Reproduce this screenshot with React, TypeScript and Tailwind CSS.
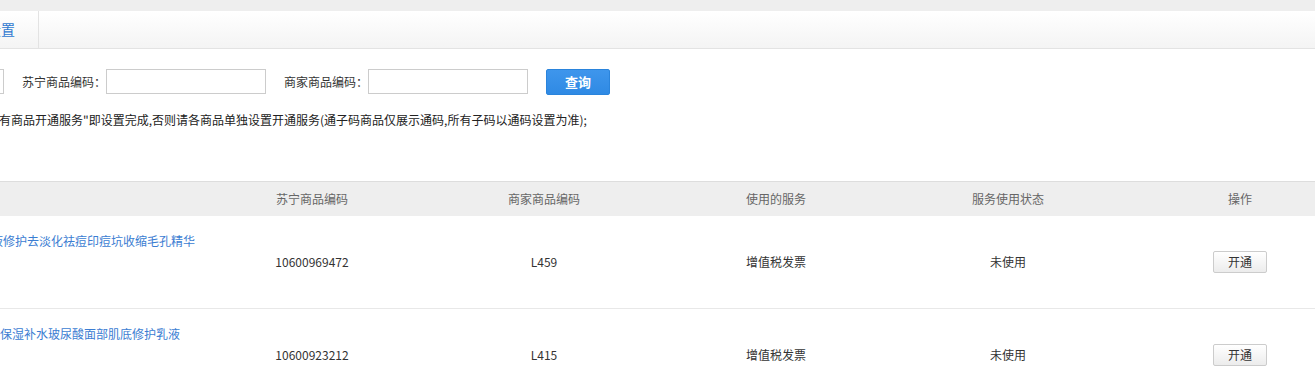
import React from "react";

const font = { fontFamily: '"Noto Sans CJK SC", "Noto Sans", sans-serif' };

const rows = [
  { name: "液修护去淡化祛痘印痘坑收缩毛孔精华", nameClass: "-ml-[9px]", sn: "10600969472", code: "L459" },
  { name: "保湿补水玻尿酸面部肌底修护乳液", nameClass: "ml-0", sn: "10600923212", code: "L415" },
];

export default function App() {
  return (
    <div className="w-[1315px] h-[371px] overflow-hidden bg-white text-[12px] text-[#333]" style={font}>
      <div className="h-[11px] bg-[#eeeeee]" />
      <div className="h-[38px] flex border-b border-[#e3e3e3] bg-gradient-to-b from-white to-[#f4f4f4]">
        <div className="w-[52px] shrink-0 -ml-[13px] border-r border-[#e3e3e3] flex items-center text-[14px] text-[#2f79d0] whitespace-nowrap">
          设置
        </div>
      </div>

      <div className="mt-[20px] flex items-center h-[25px]">
        <div className="w-[4px] h-[25px] border border-l-0 border-[#cccccc]" />
        <span className="ml-[18px] w-[84px] whitespace-nowrap">苏宁商品编码：</span>
        <div className="w-[160px] h-[25px] border border-[#cccccc]" />
        <span className="ml-[18px] w-[84px] whitespace-nowrap">商家商品编码：</span>
        <div className="w-[160px] h-[25px] border border-[#cccccc]" />
        <button className="ml-[18px] w-[64px] h-[26px] rounded-[2px] border border-[#2a84dc] bg-gradient-to-b from-[#3e96ec] to-[#2f8ae4] text-white font-bold text-[13px]">
          查询
        </button>
      </div>

      <div className="mt-[16px] leading-[20px] whitespace-nowrap -ml-[1px] text-[#222]">
        有商品开通服务"即设置完成,否则请各商品单独设置开通服务(通子码商品仅展示通码,所有子码以通码设置为准);
      </div>

      <div className="mt-[51px] w-[1356px]">
        <div className="grid grid-cols-[196px_232px_232px_232px_232px_232px] h-[35px] bg-[#eeeeee] border-t border-[#dddddd] text-[#666] items-center text-center">
          <div />
          <div>苏宁商品编码</div>
          <div>商家商品编码</div>
          <div>使用的服务</div>
          <div>服务使用状态</div>
          <div>操作</div>
        </div>
        {rows.map((r) => (
          <div
            key={r.sn}
            className="grid grid-cols-[196px_232px_232px_232px_232px_232px] h-[93px] border-b border-[#e8e8e8] items-center text-center"
          >
            <div className="self-stretch pt-[16px] text-left">
              <div className={`whitespace-nowrap text-[#3b7dd2] leading-[18px] ${r.nameClass}`}>{r.name}</div>
            </div>
            <div>{r.sn}</div>
            <div>{r.code}</div>
            <div>增值税发票</div>
            <div>未使用</div>
            <div className="flex justify-center">
              <button className="w-[54px] h-[22px] border border-[#cccccc] rounded-[2px] bg-gradient-to-b from-white to-[#ececec] text-[#333] text-[12px]">
                开通
              </button>
            </div>
          </div>
        ))}
      </div>
    </div>
  );
}
